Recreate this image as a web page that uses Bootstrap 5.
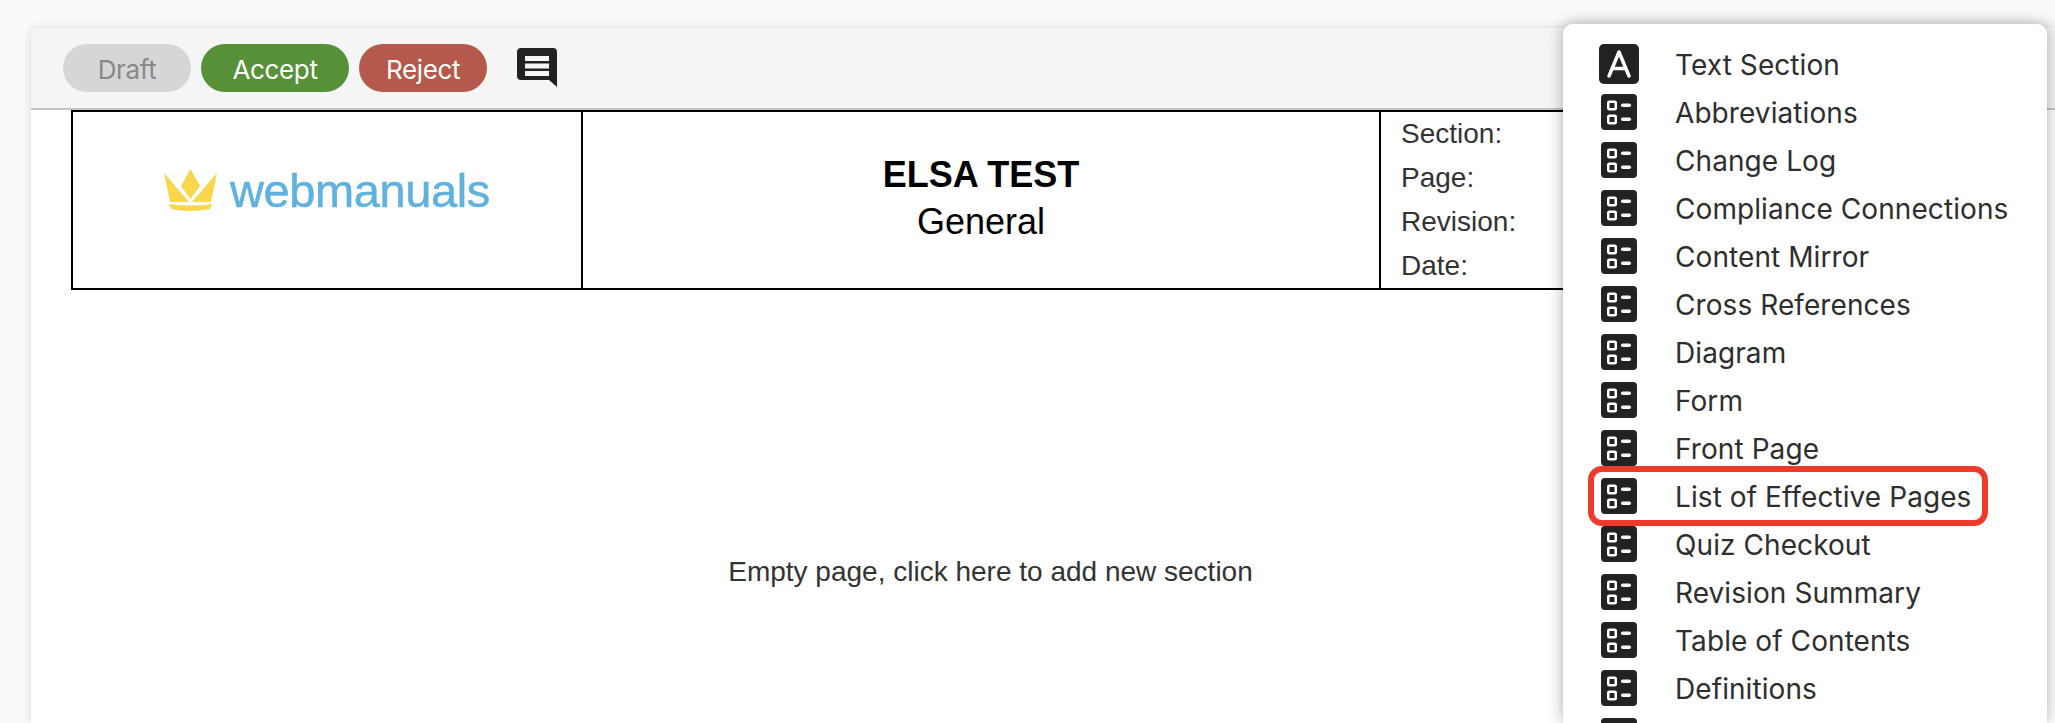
<!DOCTYPE html>
<html lang="en">
<head>
<meta charset="utf-8">
<title>Webmanuals page editor</title>
<link href="https://cdn.jsdelivr.net/npm/bootstrap@5.3.0/dist/css/bootstrap.min.css" rel="stylesheet">
<style>
html,body{height:723px;overflow:hidden}
body{background:#fafafa;font-family:"Liberation Sans",sans-serif;color:#222}
.stage{position:relative;height:723px;padding:28px 0 0 31px;overflow:hidden}
.sheet{background:#fff;height:695px;overflow:hidden;border-radius:6px 0 0 0;box-shadow:0 0 10px rgba(0,0,0,.14)}
.tools{height:82px;background:#f5f5f5;border-bottom:2px solid #c4c4c4;border-radius:6px 0 0 0;padding:16px 0 0 32px;gap:10px}
.pill{height:48px;border:0;border-radius:24px;color:#fff;font:400 26px/48px Inter,sans-serif;padding:2px 0 0;letter-spacing:-.35px}
.pill-draft{width:128px;background:#d6d6d6;color:#888}
.pill-accept{width:148px;background:#569039}
.pill-reject{width:128px;background:#b4594b}
.note{margin:4px 0 0 20px}
.head{margin-left:40px;width:1600px;height:180px;border:2px solid #000}
.logo-cell{width:510px;border-right:2px solid #000;padding-bottom:20px;gap:13px}
.logo-word{font:400 47px/1 "Liberation Sans",sans-serif;color:#5fb1de;letter-spacing:-.4px;-webkit-text-stroke:.5px #5fb1de;filter:blur(.6px)}
.title-cell{width:798px;border-right:2px solid #000;font-size:36px;line-height:47px;color:#000;padding-bottom:5px}
.meta-cell{padding:0 0 0 20px;font-size:28px;line-height:44px;color:#333}
.blank{height:564px;font-size:28px;color:#333}
.blank span{margin-left:-105px}
.menu{position:absolute;left:1563px;top:24px;width:484px;height:699px;overflow:hidden;background:#fff;border-radius:10px 10px 0 0;padding:16px 0 0 36px}
.menu-shade{position:absolute;left:1563px;top:24px;width:484px;height:699px;border-radius:10px 10px 0 0;box-shadow:0 0 16px rgba(0,0,0,.32)}
.entry{height:48px;padding-top:3px;position:relative;font:400 28px/45px Inter,sans-serif;color:#2e2e2e;letter-spacing:.08px;white-space:nowrap}
.entry-ico{width:36px;height:36px;margin:-3px 38px 0 2px;flex:none}
.entry-a{width:40px;height:40px;margin:-3px 36px 0 0;flex:none}
.mark-box{position:absolute;left:-11px;top:-6px;width:400px;height:60px;border:6px solid #ee3a2a;border-radius:14px}
</style>
</head>
<body>
<svg width="0" height="0" class="d-block" aria-hidden="true"><defs>
<symbol id="tpl" viewBox="0 0 36 36">
<rect width="36" height="36" rx="4" fill="#222"/>
<rect x="7.250" y="7.750" width="7.500" height="7.500" rx="1" fill="none" stroke="#fff" stroke-width="2.500"/>
<rect x="7.250" y="21.750" width="7.500" height="7.500" rx="1" fill="none" stroke="#fff" stroke-width="2.500"/>
<rect x="20" y="9.500" width="10" height="3.400" rx="1.700" fill="#fff"/>
<rect x="20" y="23.500" width="10" height="3.400" rx="1.700" fill="#fff"/>
</symbol>
</defs></svg>
<div class="stage">
<div class="sheet">
<div class="tools d-flex align-items-start">
<button class="pill pill-draft btn">Draft</button>
<button class="pill pill-accept btn">Accept</button>
<button class="pill pill-reject btn">Reject</button>
<svg class="note" width="40" height="39" viewBox="0 0 40 39"><path d="M4 0H36a4 4 0 0 1 4 4V39L32 32H4a4 4 0 0 1-4-4V4a4 4 0 0 1 4-4Z" fill="#222"/><path d="M8 8H32V13H8ZM8 15.500H32V20.500H8ZM8 23H32V28H8Z" fill="#f5f5f5"/></svg>
</div>
<div class="head d-flex">
<div class="logo-cell d-flex align-items-center justify-content-center">
<svg width="53" height="42" viewBox="0 0 53 42"><path d="M26.500 0L36 17L26.500 30L17 17Z" fill="#f9d64a"/><path d="M0 4L25 33H6ZM53 4L28 33H47Z" fill="#f9d64a"/><path d="M5 35Q26.500 38 48 35L46 40Q26.500 44 7 40Z" fill="#f9d64a"/></svg>
<span class="logo-word">webmanuals</span>
</div>
<div class="title-cell text-center d-flex flex-column justify-content-center"><b>ELSA TEST</b><span>General</span></div>
<div class="meta-cell"><div>Section:</div><div>Page:</div><div>Revision:</div><div>Date:</div></div>
</div>
<div class="blank d-flex align-items-center justify-content-center"><span>Empty page, click here to add new section</span></div>
</div>
<div class="menu-shade"></div>
<div class="menu">
<div class="entry d-flex align-items-center"><svg class="entry-a" viewBox="0 0 40 40"><rect width="40" height="40" rx="5" fill="#222"/><path d="M10 32L20 8L30 32M13.500 24.500H26.500" fill="none" stroke="#fff" stroke-width="3.500" stroke-linecap="round" stroke-linejoin="round"/></svg>Text Section</div>
<div class="entry d-flex align-items-center"><svg class="entry-ico"><use href="#tpl"/></svg>Abbreviations</div>
<div class="entry d-flex align-items-center"><svg class="entry-ico"><use href="#tpl"/></svg>Change Log</div>
<div class="entry d-flex align-items-center"><svg class="entry-ico"><use href="#tpl"/></svg>Compliance Connections</div>
<div class="entry d-flex align-items-center"><svg class="entry-ico"><use href="#tpl"/></svg>Content Mirror</div>
<div class="entry d-flex align-items-center"><svg class="entry-ico"><use href="#tpl"/></svg>Cross References</div>
<div class="entry d-flex align-items-center"><svg class="entry-ico"><use href="#tpl"/></svg>Diagram</div>
<div class="entry d-flex align-items-center"><svg class="entry-ico"><use href="#tpl"/></svg>Form</div>
<div class="entry d-flex align-items-center"><svg class="entry-ico"><use href="#tpl"/></svg>Front Page</div>
<div class="entry d-flex align-items-center"><svg class="entry-ico"><use href="#tpl"/></svg>List of Effective Pages<span class="mark-box"></span></div>
<div class="entry d-flex align-items-center"><svg class="entry-ico"><use href="#tpl"/></svg>Quiz Checkout</div>
<div class="entry d-flex align-items-center"><svg class="entry-ico"><use href="#tpl"/></svg>Revision Summary</div>
<div class="entry d-flex align-items-center"><svg class="entry-ico"><use href="#tpl"/></svg>Table of Contents</div>
<div class="entry d-flex align-items-center"><svg class="entry-ico"><use href="#tpl"/></svg>Definitions</div>
<div class="entry d-flex align-items-center"><svg class="entry-ico"><use href="#tpl"/></svg></div>
</div>
</div>
<script src="https://cdn.jsdelivr.net/npm/bootstrap@5.3.0/dist/js/bootstrap.bundle.min.js"></script>
</body>
</html>
